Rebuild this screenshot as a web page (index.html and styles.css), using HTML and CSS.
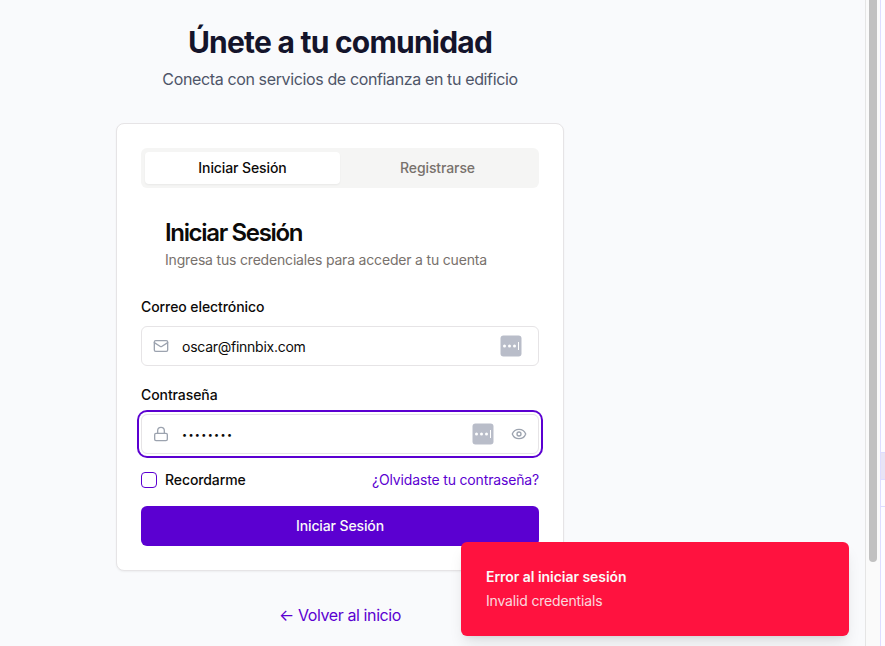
FILE: index.html
```html
<!DOCTYPE html>
<html lang="es">
<head>
<meta charset="utf-8">
<title>Únete a tu comunidad</title>
<link rel="stylesheet" href="styles.css">
</head>
<body>
<div class="shell">
  <main class="page">
    <div class="column">
      <h1 class="title"><span>Únete a tu comunidad</span></h1>
      <p class="subtitle"><span>Conecta con servicios de confianza en tu edificio</span></p>
      <section class="card">
        <div class="tabs">
          <button class="tab tab-active"><span>Iniciar Sesión</span></button>
          <button class="tab"><span>Registrarse</span></button>
        </div>
        <header class="card-header">
          <h2>Iniciar Sesión</h2>
          <p>Ingresa tus credenciales para acceder a tu cuenta</p>
        </header>
        <div class="label"><span>Correo electrónico</span></div>
        <div class="field">
          <svg class="icon" viewBox="0 0 24 24"><rect x="2" y="4" width="20" height="16" rx="2"/><path d="m22 7-8.97 5.7a1.94 1.94 0 0 1-2.06 0L2 7"/></svg>
          <span class="value">oscar@finnbix.com</span>
          <svg class="manager" viewBox="0 0 22 22"><rect class="key" x="0.5" y="0.5" width="21" height="21" rx="3"/><circle cx="4.5" cy="11" r="1.5"/><circle cx="9.5" cy="11" r="1.5"/><circle cx="14.5" cy="11" r="1.5"/><rect x="18" y="7" width="1" height="8"/></svg>
        </div>
        <div class="label label-password"><span>Contraseña</span></div>
        <div class="field field-focus">
          <svg class="icon" viewBox="0 0 24 24"><rect x="2.5" y="11" width="19" height="11" rx="2"/><path d="M7 11V7a5 5 0 0 1 10 0v4"/></svg>
          <span class="value dots">••••••••</span>
          <svg class="manager" viewBox="0 0 22 22"><rect class="key" x="0.5" y="0.5" width="21" height="21" rx="3"/><circle cx="4.5" cy="11" r="1.5"/><circle cx="9.5" cy="11" r="1.5"/><circle cx="14.5" cy="11" r="1.5"/><rect x="18" y="7" width="1" height="8"/></svg>
          <svg class="icon eye" viewBox="0 0 24 24"><path d="M2.06 12.35a1 1 0 0 1 0-.7 10.75 10.75 0 0 1 19.88 0 1 1 0 0 1 0 .7 10.75 10.75 0 0 1-19.88 0"/><circle cx="12" cy="12" r="3"/></svg>
        </div>
        <div class="options">
          <span class="checkbox"></span>
          <span class="remember">Recordarme</span>
          <a class="forgot">¿Olvidaste tu contraseña?</a>
        </div>
        <button class="submit"><span>Iniciar Sesión</span></button>
      </section>
      <a class="back"><span>← Volver al inicio</span></a>
    </div>
  </main>
  <div class="scroll"><div class="thumb"></div></div>
  <aside class="edge"><div class="edge-item"></div><div class="edge-row"></div></aside>
</div>
<div class="toast">
  <strong>Error al iniciar sesión</strong>
  <span>Invalid credentials</span>
</div>
</body>
</html>
```
FILE: styles.css
```css
* { box-sizing: border-box; }
body { margin: 0; font-family: Inter, "Liberation Sans", sans-serif; font-size: 14px; line-height: 20px; color: #0c0a09; background: #f9fafc; overflow: hidden; }
h1, h2, p { margin: 0; }
button { font: inherit; border: 0; padding: 0; }
.shell { display: flex; height: 646px; }
.page { flex: 1; display: flex; justify-content: center; padding-right: 185px; }
.column { width: 448px; padding-top: 24px; }
.title { text-align: center; font-size: 30px; line-height: 36px; font-weight: 700; color: #14142b; letter-spacing: -0.77px; }
.subtitle { margin-top: 7px; text-align: center; font-size: 16px; line-height: 24px; color: #4e5568; letter-spacing: -0.37px; }
.card { margin-top: 32px; height: 448px; padding: 24px; border: 1px solid #e6e4e6; border-radius: 8px; background: #fff; box-shadow: 0 1px 2px rgba(0,0,0,.05); }
.tabs { display: flex; height: 40px; padding: 4px; border-radius: 6px; background: #f5f5f4; }
.tab { flex: 1; background: transparent; border-radius: 4px; font-weight: 500; letter-spacing: -0.1px; color: #78716c; }
.tab-active { background: #fff; color: #0c0a09; box-shadow: 0 1px 2px rgba(0,0,0,.05); }
.card-header { padding: 33px 24px 0; }
.card-header h2 { font-size: 24px; line-height: 24px; font-weight: 600; letter-spacing: -1.33px; }
.card-header p { margin-top: 5px; color: #78716c; letter-spacing: -0.185px; }
.label { margin-top: 30px; line-height: 14px; font-weight: 500; letter-spacing: -0.08px; }
.label-password { margin-top: 22px; }
.field { display: flex; align-items: center; height: 40px; margin-top: 12px; padding: 0 16px 0 11px; border: 1px solid #e6e4e6; border-radius: 6px; background: #fff; }
.field-focus { padding-right: 11px; box-shadow: 0 0 0 2px #fff, 0 0 0 4px #5b00d1; }
.icon { width: 16px; height: 16px; fill: none; stroke: #9ca3af; stroke-width: 2; stroke-linecap: round; stroke-linejoin: round; }
.value { flex: 1; margin-left: 13px; padding-top: 2px; letter-spacing: -0.26px; }
.dots { font-size: 9px; letter-spacing: 1.35px; }
.manager { width: 22px; height: 22px; fill: #fff; }
.manager .key { fill: #b9bdc9; }
.eye { margin-left: 17px; }
.options { display: flex; align-items: center; height: 20px; margin-top: 16px; }
.checkbox { width: 16px; height: 16px; border: 1px solid #5b00d1; border-radius: 4px; }
.remember { margin-left: 8px; font-weight: 500; letter-spacing: -0.1px; }
.forgot { margin-left: auto; color: #5b00d1; letter-spacing: -0.16px; }
.submit { display: block; width: 100%; height: 40px; margin-top: 16px; border-radius: 6px; background: #5b00d1; color: #fafaf9; font-weight: 500; letter-spacing: -0.12px; }
.back { display: block; margin-top: 32px; text-align: center; font-size: 16px; line-height: 24px; color: #5b00d1; letter-spacing: -0.4px; }
.scroll { width: 15px; border-left: 1px solid #e5e5e5; background: #fafafa; padding-left: 3px; }
.thumb { width: 8px; height: 562px; border-radius: 0 0 4px 4px; background: #c1c1c1; }
.edge { width: 5px; padding-top: 452px; border-left: 1px solid #dedcff; background: #fdfcff; }
.edge-item { height: 28px; background: #e8e4f5; border: solid #dedcff; border-width: 1px 0; }
.edge-row { height: 27px; border-bottom: 1px solid #dedcff; }
.toast { position: absolute; left: 461px; top: 542px; width: 388px; height: 94px; padding: 25px; display: flex; flex-direction: column; gap: 4px; border-radius: 6px; background: #ff123f; color: #fafaf9; box-shadow: 0 10px 15px -3px rgba(0,0,0,.1), 0 4px 6px -4px rgba(0,0,0,.1); }
.toast strong { font-weight: 600; letter-spacing: -0.04px; }
.toast span { color: #fafaf9; opacity: .85; letter-spacing: -0.17px; }
```
